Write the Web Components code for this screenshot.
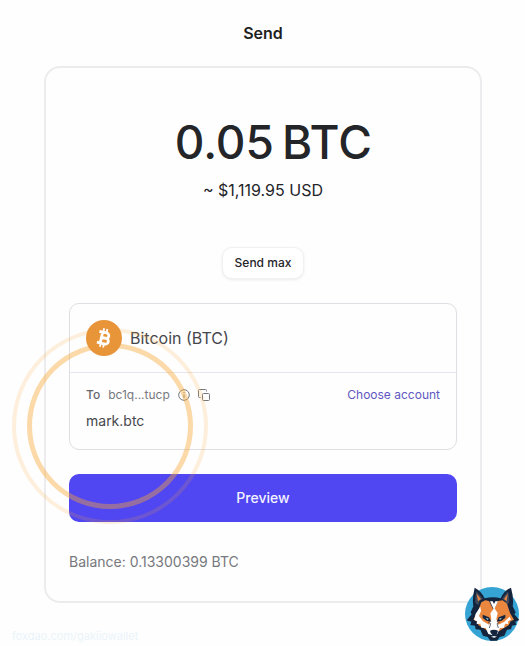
<!DOCTYPE html>
<html lang="en">
<head>
<meta charset="utf-8">
<meta name="viewport" content="width=device-width, initial-scale=1">
<title>Send</title>
<style>
  body {
    margin: 0;
    background: #fefefe;
    color: #242529;
    font-family: Inter, "Liberation Sans", sans-serif;
  }
</style>
</head>
<body>
<send-page heading="Send">
  <send-card>
    <send-amount value="0.05" unit="BTC" fiat="~ $1,119.95 USD"></send-amount>
    <recipient-box asset="Bitcoin (BTC)" address="bc1q...tucp" name="mark.btc"></recipient-box>
    <primary-button>Preview</primary-button>
    <span slot="footer">Balance: 0.13300399 BTC</span>
  </send-card>
  <span slot="watermark">foxdao.com/gakiiowallet</span>
  <fox-badge slot="badge"></fox-badge>
</send-page>

<script>
class SendPage extends HTMLElement {
  constructor() {
    super();
    this.attachShadow({ mode: "open" });
  }

  connectedCallback() {
    this.shadowRoot.innerHTML = `
    <style>
      :host {
        display: block;
        position: relative;
        box-sizing: border-box;
        min-height: 100vh;
        padding: 21px 43px 43px 44px;
        overflow: hidden;
      }

      h1 {
        margin: 0 0 21px;
        font-size: 16px;
        line-height: 24px;
        font-weight: 600;
        text-align: center;
        color: #1d1e22;
      }

      .watermark {
        position: absolute;
        left: 12px;
        bottom: 2px;
        font-size: 11px;
        line-height: 16px;
        color: #eaf4fa;
      }

      .badge {
        position: absolute;
        right: 5px;
        bottom: 4px;
      }
    </style>
    <h1>${this.getAttribute("heading")}</h1>
    <slot></slot>
    <div class="watermark"><slot name="watermark"></slot></div>
    <div class="badge"><slot name="badge"></slot></div>
    `;
  }
}

class SendCard extends HTMLElement {
  constructor() {
    super();
    this.attachShadow({ mode: "open" });
    this.shadowRoot.innerHTML = `
    <style>
      :host {
        display: flex;
        flex-direction: column;
        gap: 24px;
        border: 2px solid #ececee;
        border-radius: 16px;
        padding: 46px 23px 27px;
      }

      .footer {
        margin-top: 4px;
        font-size: 14px;
        line-height: 24px;
        color: #77787d;
      }
    </style>
    <slot></slot>
    <div class="footer"><slot name="footer"></slot></div>
    `;
  }
}

class SendAmount extends HTMLElement {
  constructor() {
    super();
    this.attachShadow({ mode: "open" });
  }

  connectedCallback() {
    this.shadowRoot.innerHTML = `
    <style>
      :host {
        display: flex;
        flex-direction: column;
        align-items: center;
      }

      .amount {
        display: flex;
        align-items: center;
        gap: 8px;
        font-size: 46px;
        line-height: 56px;
        font-weight: 450;
      }

      input {
        width: 120px;
        height: 56px;
        padding: 0;
        border: 0;
        outline: 0;
        background: none;
        color: inherit;
        font: inherit;
        text-align: right;
      }

      .fiat {
        margin: 8px 0 45px;
        font-size: 16px;
        line-height: 24px;
      }

      button {
        height: 32px;
        padding: 0 12px;
        border: 1px solid #f1f1f3;
        border-radius: 10px;
        background: #fff;
        box-shadow: 0 1px 3px rgba(0, 0, 0, .08);
        color: #242529;
        font: 500 12px/16px Inter, "Liberation Sans", sans-serif;
      }
    </style>
    <label class="amount">
      <input type="text" inputmode="decimal" value="${this.getAttribute("value")}">
      <span>${this.getAttribute("unit")}</span>
    </label>
    <div class="fiat">${this.getAttribute("fiat")}</div>
    <button type="button">Send max</button>
    `;
  }
}

class RecipientBox extends HTMLElement {
  constructor() {
    super();
    this.attachShadow({ mode: "open" });
  }

  connectedCallback() {
    this.shadowRoot.innerHTML = `
    <style>
      :host {
        display: block;
        border: 1px solid #dedee3;
        border-radius: 10px;
      }

      .asset {
        display: flex;
        align-items: center;
        gap: 8px;
        padding: 16px;
        border-bottom: 1px solid #e6e6ec;
        font-size: 16px;
        line-height: 24px;
        color: #46474d;
      }

      .coin {
        position: relative;
        width: 36px;
        height: 36px;
      }

      .coin svg {
        position: relative;
        z-index: 2;
        display: block;
      }

      /* highlight rings lie over the card but under the coin */
      .ring {
        position: absolute;
        z-index: 1;
        box-sizing: border-box;
        border-radius: 50%;
        pointer-events: none;
      }

      .inner {
        left: -59px;
        top: 23px;
        width: 166px;
        height: 166px;
        border: 5px solid rgba(247, 168, 49, .42);
      }

      .outer {
        left: -74px;
        top: 8px;
        width: 196px;
        height: 196px;
        border: 4px solid rgba(247, 168, 49, .17);
      }

      .to {
        padding: 12px 16px 16px;
      }

      .row {
        display: flex;
        align-items: center;
        gap: 8px;
        font-size: 12px;
        line-height: 20px;
        color: #77787d;
      }

      .row b {
        font-weight: 500;
        color: #66676c;
      }

      .row svg {
        display: block;
      }

      a {
        margin-left: auto;
        color: #6257c2;
        text-decoration: none;
      }

      .name {
        margin-top: 4px;
        font-size: 14px;
        line-height: 24px;
        color: #46474d;
      }
    </style>
    <div class="asset">
      <div class="coin">
        <svg width="36" height="36" viewBox="0 0 36 36">
          <circle cx="18" cy="18" r="18" fill="#e8953a"/>
          <g transform="rotate(13 18 18)" fill="none" stroke="#fff">
            <path d="M12 12.500h7.500a2.600 2.600 0 0 1 0 5.400h-3.600M15.400 17.900h4.700a2.800 2.800 0 0 1 0 5.800H12M15.400 12.500v11.200" stroke-width="2.800"/>
            <path d="M16 8.500V12M19.300 8.500V12M16 24v3.500M19.300 24v3.500" stroke-width="1.800"/>
          </g>
        </svg>
        <div class="ring inner"></div>
        <div class="ring outer"></div>
      </div>
      <span>${this.getAttribute("asset")}</span>
    </div>
    <div class="to">
      <div class="row">
        <b>To</b>
        <span>${this.getAttribute("address")}</span>
        <svg width="12" height="12" viewBox="0 0 12 12" fill="none" stroke="#77787d">
          <circle cx="6" cy="6" r="5.300"/>
          <path d="M6 5.400V9M6 3v1.200"/>
        </svg>
        <svg width="12" height="12" viewBox="0 0 12 12" fill="none" stroke="#77787d">
          <rect x="4.500" y="4.500" width="7" height="7" rx="1"/>
          <path d="M2.500 8.500h-1a1 1 0 0 1-1-1v-6a1 1 0 0 1 1-1h6a1 1 0 0 1 1 1v1"/>
        </svg>
        <a href="#accounts">Choose account</a>
      </div>
      <div class="name">${this.getAttribute("name")}</div>
    </div>
    `;
  }
}

class PrimaryButton extends HTMLElement {
  constructor() {
    super();
    this.attachShadow({ mode: "open" });
    this.shadowRoot.innerHTML = `
    <style>
      :host {
        display: block;
      }

      button {
        display: block;
        width: 100%;
        height: 48px;
        border: 0;
        border-radius: 10px;
        background: #5046f2;
        color: #f4f3ff;
        font: 500 14px/20px Inter, "Liberation Sans", sans-serif;
      }
    </style>
    <button type="button"><slot></slot></button>
    `;
  }
}

class FoxBadge extends HTMLElement {
  constructor() {
    super();
    this.attachShadow({ mode: "open" });
    this.shadowRoot.innerHTML = `
    <style>
      :host {
        display: block;
      }

      svg {
        display: block;
      }
    </style>
    <svg width="56" height="56" viewBox="26 29 168 168" role="img" aria-label="Fox">
      <circle cx="110" cy="113" r="81" fill="#35a3d3"/>
      <path d="M58 34q-8 32-4 56l-8 18 3 6-15 18 14 4-3 10 14 2 2 11 14 1 8 18 14 4 8 11h20l8-11 14-4 8-18 12-1 3-11 13-3-3-9 12-5-15-17 4-6-9-18q4-24-5-56-20 8-31 32-22-6-48 0-10-22-30-32Z" fill="#14243d"/>
      <path d="m63 45 20 22-10 6-4 14-9-8q-1-18 3-34Zm95 0-18 22 9 6 4 14 8-8q2-18-3-34Z" fill="#3e485c"/>
      <path d="m64 52 13 16-9 7Zm93 0-11 16 8 7Z" fill="#e48544"/>
      <path d="m78 78 12-6 11 2 14 28 13-28 14-2 13 10 9 28 12 20-10 5-6 12-14 8-14 9-17 4-17-4-14-9-14-8-6-12-10-5 12-20Z" fill="#e8873d"/>
      <path d="m104 75 12 26 12-26h-8l-4 8-4-8Z" fill="#fff"/>
      <path d="m75 91-14 21-5 18 9 5-1 8 11-1 3 12 13 1 8 18 13 4 14-4 8-18 12-1 3-12 10 1-1-8 9-5-4-9-16 15-18 9-6-17 4-18-10-15-12 16 3 17-7 17-18-10-12-16 6-15Z" fill="#fff"/>
      <path d="m82 115 19 8 7 13-15-3-11-9Zm68 0-20 8-6 13 15-3 11-9Z" fill="#14243d"/>
      <path d="m91 124 9 3-3 4Zm49 0-9 3 3 4Z" fill="#a9ddeb"/>
      <path d="m98 137 8 5-4 13m31-18-8 5 4 13" fill="none" stroke="#14243d" stroke-width="2"/>
      <path d="M104 163q12-6 24 0-1 10-8 14l12 2q-6 9-16 9t-17-9l13-2q-7-5-8-14Z" fill="#14243d"/>
      <path d="m107 181 9-2 9 2-9 3Z" fill="#fff"/>
    </svg>
    `;
  }
}

customElements.define("send-page", SendPage);
customElements.define("send-card", SendCard);
customElements.define("send-amount", SendAmount);
customElements.define("recipient-box", RecipientBox);
customElements.define("primary-button", PrimaryButton);
customElements.define("fox-badge", FoxBadge);
</script>
</body>
</html>
